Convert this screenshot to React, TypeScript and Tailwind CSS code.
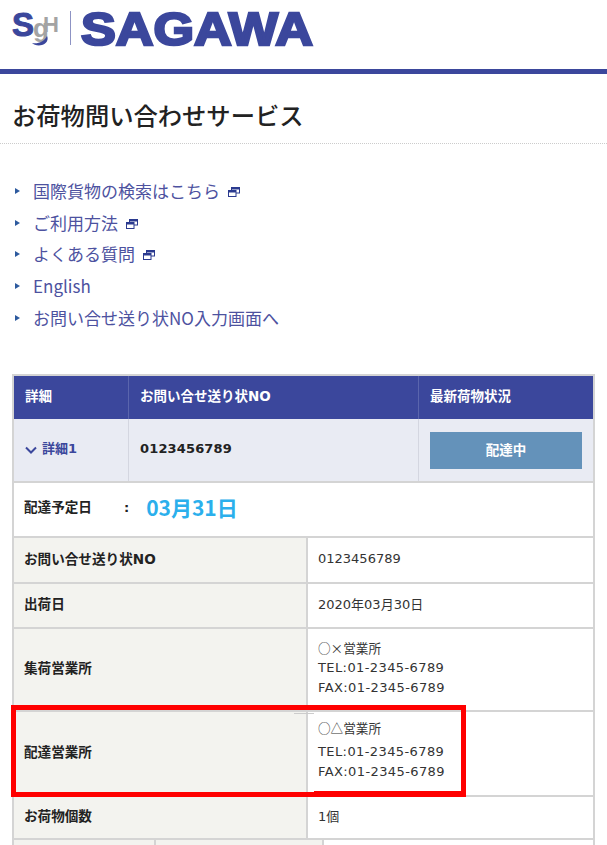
import React from 'react';

const FONT = "font-['DejaVu_Sans','Noto_Sans_CJK_JP',sans-serif]";
const CJK = "font-['Noto_Sans_CJK_JP','Noto_Sans',sans-serif]";

const LINKS = [
  { label: '国際貨物の検索はこちら', external: true },
  { label: 'ご利用方法', external: true },
  { label: 'よくある質問', external: true },
  { label: 'English', external: false },
  { label: 'お問い合せ送り状NO入力画面へ', external: false },
];

const WindowIcon = () => (
  <svg width="12" height="10" viewBox="0 0 12 10" className="ml-[8px] mt-[2px] shrink-0" fill="none" stroke="#2b3a8f">
    <rect x="3.5" y="0.5" width="8" height="5.5" strokeWidth="1" />
    <line x1="3.5" y1="1.5" x2="11.5" y2="1.5" strokeWidth="2" />
    <rect x="0.5" y="3.5" width="7.5" height="6" fill="#fff" strokeWidth="1" />
    <line x1="0.5" y1="4.5" x2="8" y2="4.5" strokeWidth="2" />
  </svg>
);

const Row = ({ label, height, pad = 'pb-[3px]', children }: { label: string; height: string; pad?: string; children: React.ReactNode }) => (
  <div className={`flex border-t-2 border-[#d4d4d4] ${height}`}>
    <div className="w-[294px] shrink-0 bg-[#f3f3ef] border-r-2 border-[#d4d4d4] pl-[10px] pb-[3px] flex items-center text-[13.6px] font-bold text-[#222]">
      {label}
    </div>
    <div className={`flex-1 bg-white pl-[10px] flex flex-col justify-center text-[13px] text-[#333] ${pad}`}>{children}</div>
  </div>
);

export default function App() {
  return (
    <div className={`w-[607px] h-[845px] overflow-hidden bg-white relative ${FONT}`}>
      <header className="h-[74px] border-b-[5px] border-[#3b479c] flex items-start pt-[11px] pl-[12px]">
        <div className="w-[48px] h-[35px] relative shrink-0 font-['Liberation_Sans',sans-serif] font-bold leading-none">
          <span className="absolute left-[21px] top-[4px] text-[26px] text-[#a3a3a3]">g</span>
          <span className="absolute left-[31px] top-[3px] text-[22px] text-[#a3a3a3]">H</span>
          <span className="absolute left-0 top-[-3px] text-[33px] text-[#3b479c] [-webkit-text-stroke:1px_#3b479c]">S</span>
          <svg width="20" height="10" viewBox="0 0 20 10" className="absolute left-[19px] top-[25px]" fill="#3b479c">
            <path d="M1 7C7 8 13 6 16 0c2 4-1 8-5 9-4 1-8 0-10-2z" />
          </svg>
        </div>
        <div className="w-px h-[34px] bg-[#8d93c4] ml-[10px]" />
        <div className="ml-[10px] h-[35px] font-['Liberation_Sans',sans-serif] font-bold text-[#3b479c] text-[47px] leading-[35px] [-webkit-text-stroke:2.5px_#3b479c] origin-left scale-x-[1.11] whitespace-nowrap">
          SAGAWA
        </div>
      </header>

      <div className={`h-[70px] border-b border-dotted border-[#cccccc] pl-[12px] pt-[14px] flex items-center text-[24.3px] leading-none text-[#222] font-medium ${CJK}`}>
        お荷物問い合わせサービス
      </div>

      <ul className={`pt-[31px] pl-[15px] text-[17px] text-[#4d529f] ${CJK}`}>
        {LINKS.map((link) => (
          <li key={link.label} className="h-[31.7px] flex items-center">
            <span className="w-0 h-0 border-y-[3.5px] border-y-transparent border-l-[5px] border-l-[#2d5a9e] mr-[13px]" />
            {link.label}
            {link.external && <WindowIcon />}
          </li>
        ))}
      </ul>

      <div className="mt-[41px] mx-[12px] border-x-2 border-[#d4d4d4]">
        <div className="flex h-[45px] bg-[#3b479c] text-white text-[13.5px] font-bold border-t-2 border-[#d4d4d4]">
          <div className="w-[115px] pl-[11px] pb-[4px] flex items-center border-r border-[#5a65ad]">詳細</div>
          <div className="w-[290px] pl-[11px] pb-[4px] flex items-center border-r border-[#5a65ad]">お問い合せ送り状NO</div>
          <div className="flex-1 pl-[11px] pb-[4px] flex items-center">最新荷物状況</div>
        </div>
        <div className="flex h-[64px] bg-[#e9ebf3] border-b-2 border-[#d4d4d4]">
          <div className="w-[115px] pl-[11px] pb-[3px] flex items-center border-r border-[#d4d6e0] text-[13px] font-bold text-[#3b479c]">
            <svg width="12" height="8" viewBox="0 0 12 8" fill="none" stroke="#3b479c" strokeWidth="2" className="mr-[5px] mt-[2px]">
              <path d="M1 1.5l5 5 5-5" />
            </svg>
            詳細1
          </div>
          <div className="w-[290px] pl-[11px] pb-[3px] flex items-center border-r border-[#d4d6e0] text-[13px] font-bold text-[#222] tracking-[0.15px]">
            0123456789
          </div>
          <div className="flex-1 pl-[11px] pr-[11px] flex items-center">
            <div className="w-full h-[37px] bg-[#6492ba] flex items-center justify-center text-white text-[13.5px] font-bold">配達中</div>
          </div>
        </div>
        <div className="h-[53px] flex items-center pl-[10px] pb-[5px] bg-white">
          <span className="w-[100px] text-[13.6px] font-bold text-[#222]">配達予定日</span>
          <span className="text-[13px] font-bold text-[#222] mr-[17px]">:</span>
          <span className={`text-[21px] font-bold text-[#2bafec] ${CJK}`}>03月31日</span>
        </div>
        <Row label="お問い合せ送り状NO" height="h-[46px]">
          <span>0123456789</span>
        </Row>
        <Row label="出荷日" height="h-[45px]">
          <span>2020年03月30日</span>
        </Row>
        <Row label="集荷営業所" height="h-[83px]">
          <span className={`leading-[20px] text-[12.6px] ${CJK}`}>○×営業所</span>
          <span className="leading-[20px] tracking-[0.4px]">TEL:01-2345-6789</span>
          <span className="leading-[20px] tracking-[0.4px]">FAX:01-2345-6789</span>
        </Row>
        <Row label="配達営業所" height="h-[85px]" pad="pb-[7px]">
          <span className={`leading-[20px] mb-[4px] text-[12.6px] ${CJK}`}>○△営業所</span>
          <span className="leading-[20px] tracking-[0.4px]">TEL:01-2345-6789</span>
          <span className="leading-[20px] tracking-[0.4px]">FAX:01-2345-6789</span>
        </Row>
        <Row label="お荷物個数" height="h-[43px]">
          <span>1個</span>
        </Row>
        <div className="flex h-[10px] border-t-2 border-[#d4d4d4] bg-[#f3f3ef]">
          <div className="w-[142px] border-r-2 border-[#d4d4d4]" />
          <div className="w-[168px] border-r-2 border-[#d4d4d4]" />
          <div className="flex-1 bg-white" />
        </div>
      </div>

      {/* annotation box with its paste seams */}
      <div className="absolute left-[294px] top-[713px] w-[20px] h-px bg-[#cccccc]" />
      <div className="absolute left-[11px] top-[705px] w-[455px] h-[92px] border-[5.5px] border-[#ff0000]" />
      <div className="absolute left-[314px] top-[791px] w-[147px] h-px bg-[#ff0000]" />
    </div>
  );
}
